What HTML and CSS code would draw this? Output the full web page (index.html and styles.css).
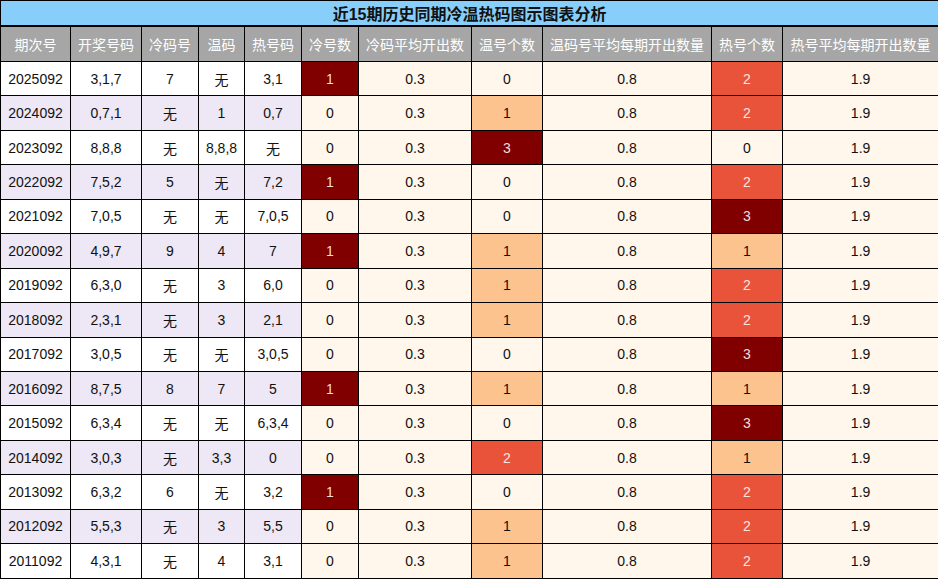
FILE: index.html
```html
<!DOCTYPE html>
<html lang="zh">
<head>
<meta charset="utf-8">
<title>近15期历史同期冷温热码图示图表分析</title>
<link rel="stylesheet" href="styles.css">
</head>
<body>
<table class="chart">
  <colgroup>
    <col class="c1"><col class="c2"><col class="c3"><col class="c4"><col class="c5"><col class="c6"><col class="c7"><col class="c8"><col class="c9"><col class="c10"><col class="c11">
  </colgroup>
  <thead>
    <tr class="title"><th colspan="11">近15期历史同期冷温热码图示图表分析</th></tr>
    <tr class="head">
      <th>期次号</th><th>开奖号码</th><th>冷码号</th><th>温码</th><th>热号码</th><th>冷号数</th><th>冷码平均开出数</th><th>温号个数</th><th>温码号平均每期开出数量</th><th>热号个数</th><th>热号平均每期开出数量</th>
    </tr>
  </thead>
  <tbody>
    <tr><td>2025092</td><td>3,1,7</td><td>7</td><td>无</td><td>3,1</td><td class="s dk">1</td><td class="s">0.3</td><td class="s">0</td><td class="s">0.8</td><td class="s rd">2</td><td class="s">1.9</td></tr>
    <tr class="alt"><td>2024092</td><td>0,7,1</td><td>无</td><td>1</td><td>0,7</td><td class="s">0</td><td class="s">0.3</td><td class="s lt">1</td><td class="s">0.8</td><td class="s rd">2</td><td class="s">1.9</td></tr>
    <tr><td>2023092</td><td>8,8,8</td><td>无</td><td>8,8,8</td><td>无</td><td class="s">0</td><td class="s">0.3</td><td class="s dk">3</td><td class="s">0.8</td><td class="s">0</td><td class="s">1.9</td></tr>
    <tr class="alt"><td>2022092</td><td>7,5,2</td><td>5</td><td>无</td><td>7,2</td><td class="s dk">1</td><td class="s">0.3</td><td class="s">0</td><td class="s">0.8</td><td class="s rd">2</td><td class="s">1.9</td></tr>
    <tr><td>2021092</td><td>7,0,5</td><td>无</td><td>无</td><td>7,0,5</td><td class="s">0</td><td class="s">0.3</td><td class="s">0</td><td class="s">0.8</td><td class="s dk">3</td><td class="s">1.9</td></tr>
    <tr class="alt"><td>2020092</td><td>4,9,7</td><td>9</td><td>4</td><td>7</td><td class="s dk">1</td><td class="s">0.3</td><td class="s lt">1</td><td class="s">0.8</td><td class="s lt">1</td><td class="s">1.9</td></tr>
    <tr><td>2019092</td><td>6,3,0</td><td>无</td><td>3</td><td>6,0</td><td class="s">0</td><td class="s">0.3</td><td class="s lt">1</td><td class="s">0.8</td><td class="s rd">2</td><td class="s">1.9</td></tr>
    <tr class="alt"><td>2018092</td><td>2,3,1</td><td>无</td><td>3</td><td>2,1</td><td class="s">0</td><td class="s">0.3</td><td class="s lt">1</td><td class="s">0.8</td><td class="s rd">2</td><td class="s">1.9</td></tr>
    <tr><td>2017092</td><td>3,0,5</td><td>无</td><td>无</td><td>3,0,5</td><td class="s">0</td><td class="s">0.3</td><td class="s">0</td><td class="s">0.8</td><td class="s dk">3</td><td class="s">1.9</td></tr>
    <tr class="alt"><td>2016092</td><td>8,7,5</td><td>8</td><td>7</td><td>5</td><td class="s dk">1</td><td class="s">0.3</td><td class="s lt">1</td><td class="s">0.8</td><td class="s lt">1</td><td class="s">1.9</td></tr>
    <tr><td>2015092</td><td>6,3,4</td><td>无</td><td>无</td><td>6,3,4</td><td class="s">0</td><td class="s">0.3</td><td class="s">0</td><td class="s">0.8</td><td class="s dk">3</td><td class="s">1.9</td></tr>
    <tr class="alt"><td>2014092</td><td>3,0,3</td><td>无</td><td>3,3</td><td>0</td><td class="s">0</td><td class="s">0.3</td><td class="s rd">2</td><td class="s">0.8</td><td class="s lt">1</td><td class="s">1.9</td></tr>
    <tr><td>2013092</td><td>6,3,2</td><td>6</td><td>无</td><td>3,2</td><td class="s dk">1</td><td class="s">0.3</td><td class="s">0</td><td class="s">0.8</td><td class="s rd">2</td><td class="s">1.9</td></tr>
    <tr class="alt"><td>2012092</td><td>5,5,3</td><td>无</td><td>3</td><td>5,5</td><td class="s">0</td><td class="s">0.3</td><td class="s lt">1</td><td class="s">0.8</td><td class="s rd">2</td><td class="s">1.9</td></tr>
    <tr><td>2011092</td><td>4,3,1</td><td>无</td><td>4</td><td>3,1</td><td class="s">0</td><td class="s">0.3</td><td class="s lt">1</td><td class="s">0.8</td><td class="s rd">2</td><td class="s">1.9</td></tr>
  </tbody>
</table>
</body>
</html>
```
FILE: styles.css
```css
html, body {
  margin: 0;
  padding: 0;
  background: #ffffff;
}
body {
  font-family: "Liberation Sans", "Noto Sans CJK SC", Arial, sans-serif;
  font-size: 14px;
  color: #111111;
}
.chart {
  width: 938px;
  border-collapse: collapse;
  table-layout: fixed;
  border: 1px solid #000;
}
.c1 { width: 70px; }
.c2 { width: 71px; }
.c3 { width: 57px; }
.c4 { width: 46px; }
.c5 { width: 57px; }
.c6 { width: 57px; }
.c7 { width: 113px; }
.c8 { width: 71px; }
.c9 { width: 169px; }
.c10 { width: 71px; }
.c11 { width: 156px; }
.chart th,
.chart td {
  border: 1px solid #000;
  text-align: center;
  padding: 0;
  white-space: nowrap;
  overflow: hidden;
}
.title th {
  height: 23px;
  background: #87cefa;
  font-size: 16px;
  font-weight: bold;
  color: #111;
  border-bottom: 2px solid #000;
}
.head th {
  height: 34px;
  background: #a6a6a6;
  color: #ffffff;
  font-weight: normal;
  font-size: 14px;
}
.chart td {
  height: 33.45px;
  background: #ffffff;
}
.chart tr.alt td {
  background: #ede7f6;
}
.chart td.s,
.chart tr.alt td.s {
  background: #fff6ec;
}
.chart td.dk,
.chart tr.alt td.dk {
  background: #800000;
  color: #f3dede;
}
.chart td.rd,
.chart tr.alt td.rd {
  background: #e8533a;
  color: #fbe5e0;
}
.chart td.lt,
.chart tr.alt td.lt {
  background: #fdc38e;
  color: #111;
}
```
